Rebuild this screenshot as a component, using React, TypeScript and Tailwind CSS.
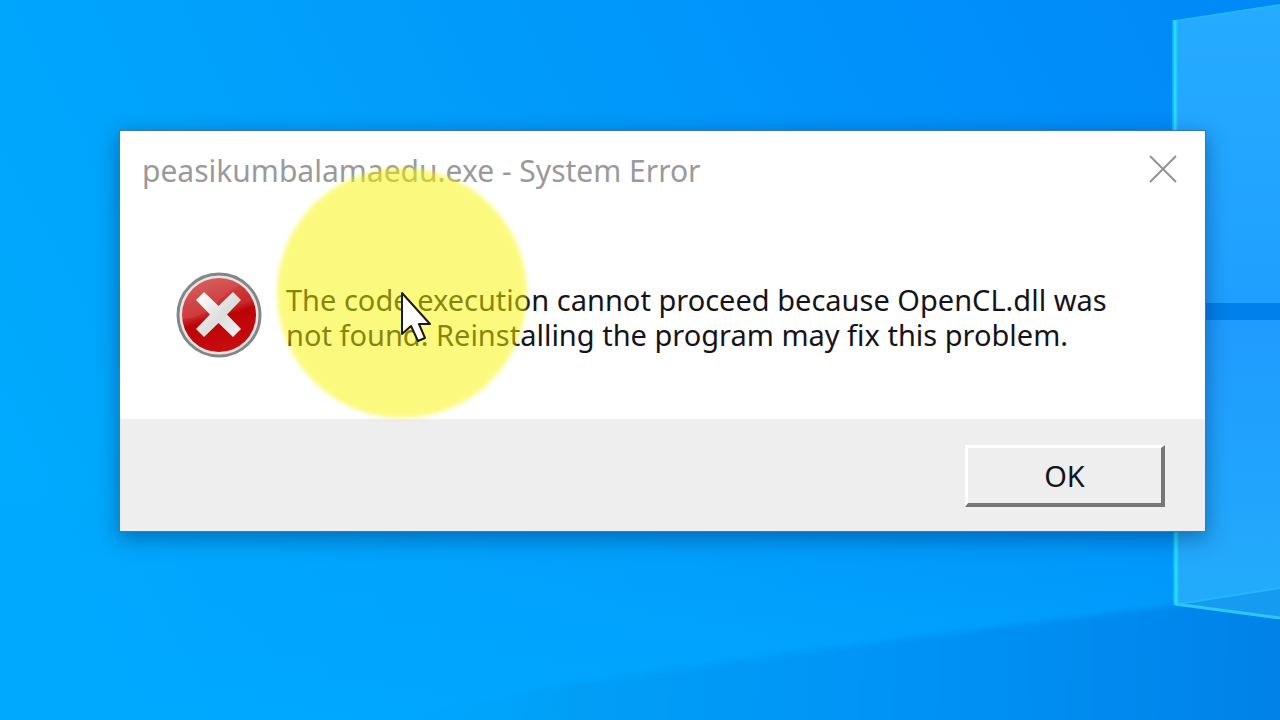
import { useState } from "react"

function Wallpaper() {
    return (
        <svg className="absolute inset-0 h-full w-full" viewBox="0 0 1280 720" preserveAspectRatio="xMaxYMid slice" aria-hidden="true">
            <defs>
                <linearGradient id="sky" x1="0" y1="0.6" x2="1" y2="0.3">
                    <stop offset="0" stopColor="#00aafd" />
                    <stop offset="0.5" stopColor="#009bfa" />
                    <stop offset="0.85" stopColor="#008ffb" />
                    <stop offset="1" stopColor="#008af8" />
                </linearGradient>
                <linearGradient id="floor" gradientUnits="userSpaceOnUse" x1="340" y1="700" x2="1280" y2="720">
                    <stop offset="0" stopColor="#00a8ff" stopOpacity="0" />
                    <stop offset="0.25" stopColor="#009ff6" />
                    <stop offset="0.6" stopColor="#0093f6" />
                    <stop offset="1" stopColor="#0082e8" />
                </linearGradient>
                <linearGradient id="beam" x1="0" y1="0" x2="0" y2="1">
                    <stop offset="0" stopColor="#00a4ff" stopOpacity="0" />
                    <stop offset="1" stopColor="#00a8ff" stopOpacity="0.9" />
                </linearGradient>
                <linearGradient id="pane" x1="0" y1="0" x2="0" y2="1">
                    <stop offset="0" stopColor="#25acff" />
                    <stop offset="1" stopColor="#1f9fff" />
                </linearGradient>
                <linearGradient id="paneLow" x1="0" y1="0" x2="0" y2="1">
                    <stop offset="0" stopColor="#1f9bff" />
                    <stop offset="1" stopColor="#22acfa" />
                </linearGradient>
                <filter id="soft" x="-10%" y="-30%" width="120%" height="160%">
                    <feGaussianBlur stdDeviation="3" />
                </filter>
            </defs>
            <rect width="1280" height="720" fill="url(#sky)" />
            <path d="M0 480H1280V720H0Z" fill="url(#beam)" />
            <path d="M340 728L550 687L800 652L1175 605L1300 588V760H340Z" fill="url(#floor)" filter="url(#soft)" />
            <path d="M1175 21L1280 5V303H1175Z" fill="url(#pane)" />
            <path d="M1175 303H1280V320H1175Z" fill="#0080ea" />
            <path d="M1175 320H1280V618L1175 604Z" fill="url(#paneLow)" />
            <path d="M1178 604L1280 588V618Z" fill="#159cf0" />
            <path d="M1178 604L1280 588" stroke="#27b4fb" strokeWidth="2" />
            <path d="M1175 21L1280 5" stroke="#27b4ff" strokeWidth="2" />
            <path d="M1175 604L1280 618" stroke="#2cc8ff" strokeWidth="3" />
            <path d="M1175 20V303M1176 320V605" stroke="#1fc0fb" strokeWidth="6" strokeOpacity="0.6" />
            <path d="M1175 20V303M1176 320V605" stroke="#25dcff" strokeWidth="3" />
        </svg>
    )
}

function ErrorIcon() {
    return (
        <svg className="h-[86px] w-[86px] shrink-0" viewBox="0 0 86 86" aria-hidden="true">
            <defs>
                <linearGradient id="ball" x1="0.3" y1="0" x2="0.6" y2="1">
                    <stop offset="0" stopColor="#d5504f" />
                    <stop offset="0.45" stopColor="#c9282b" />
                    <stop offset="0.55" stopColor="#bb0305" />
                    <stop offset="1" stopColor="#c90d10" />
                </linearGradient>
                <linearGradient id="cross" x1="0" y1="0" x2="1" y2="1">
                    <stop offset="0" stopColor="#ffffff" />
                    <stop offset="0.55" stopColor="#dcdedc" />
                    <stop offset="1" stopColor="#f2f2f2" />
                </linearGradient>
            </defs>
            <circle cx="43" cy="43" r="41" fill="#e4e6e6" stroke="#858787" strokeWidth="3" />
            <circle cx="43" cy="43" r="37" fill="url(#ball)" />
            <path d="M6 47A37 37 0 0 1 65 13C52 19 43 28 36 37C27 42 16 47 6 47Z" fill="#ffffff" fillOpacity="0.08" />
            <path d="M28 20L42.500 34L57 20L65 28L51 42.500L65 57L57 65L42.500 51L28 65L20 57L34 42.500L20 28Z" fill="url(#cross)" />
        </svg>
    )
}

function Pointer() {
    return (
        <svg className="pointer-events-none absolute top-[291px] left-[400px] h-[54px] w-[34px]" viewBox="0 0 34 54" aria-hidden="true">
            <path d="M2 2V43L11 35L18 50L25 47L19 33H30Z" fill="#ffffff" stroke="#1c1a16" strokeWidth="2" strokeLinejoin="round" />
        </svg>
    )
}

export default function App() {
    const [open, setOpen] = useState(true)

    return (
        <main className="relative min-h-screen overflow-hidden bg-[#0098fb] pt-[130px] pr-[74px] pl-[119px] font-['Noto_Sans','Open_Sans',sans-serif]">
            <Wallpaper />

            {open && (
                <section
                    role="alertdialog"
                    aria-labelledby="dialog-title"
                    aria-describedby="dialog-message"
                    className="relative border border-[#3c78a8] bg-white shadow-[0_6px_20px_rgba(0,40,90,0.45)]"
                >
                    <header className="flex h-20 items-start justify-between pt-5 pr-6 pl-[22px]">
                        <h1 id="dialog-title" className="text-[30px] leading-10 text-[#9b999b]">
                            peasikumbalamaedu.exe - System Error
                        </h1>
                        <button type="button" aria-label="Close" onClick={() => setOpen(false)} className="p-1">
                            <svg className="h-7 w-7" viewBox="0 0 28 28" aria-hidden="true">
                                <path d="M1 1L27 27M27 1L1 27" stroke="#929292" strokeWidth="2" />
                            </svg>
                        </button>
                    </header>

                    <div className="flex items-center gap-6 px-14 pt-[61px] pb-[61px]">
                        <ErrorIcon />
                        <p id="dialog-message" className="pt-1 text-[29px] leading-[35px] text-[#16141a]">
                            The code execution cannot proceed because OpenCL.dll was
                            <br />
                            not found. Reinstalling the program may fix this problem.
                        </p>
                    </div>

                    <footer className="flex justify-end bg-[#eeeeee] px-10 pt-[26px] pb-6">
                        <button
                            type="button"
                            onClick={() => setOpen(false)}
                            className="h-[62px] w-[200px] border-t-3 border-r-4 border-b-4 border-l-3 border-t-white border-r-[#777777] border-b-[#777777] border-l-white bg-[#eeeeee] text-[29px] leading-10 text-[#16141a]"
                        >
                            OK
                        </button>
                    </footer>
                </section>
            )}

            <div className="pointer-events-none absolute top-[168px] left-[277px] h-[250px] w-[250px] rounded-full bg-[#f8f500]/50 blur-[2px]" />
            <Pointer />
        </main>
    )
}
